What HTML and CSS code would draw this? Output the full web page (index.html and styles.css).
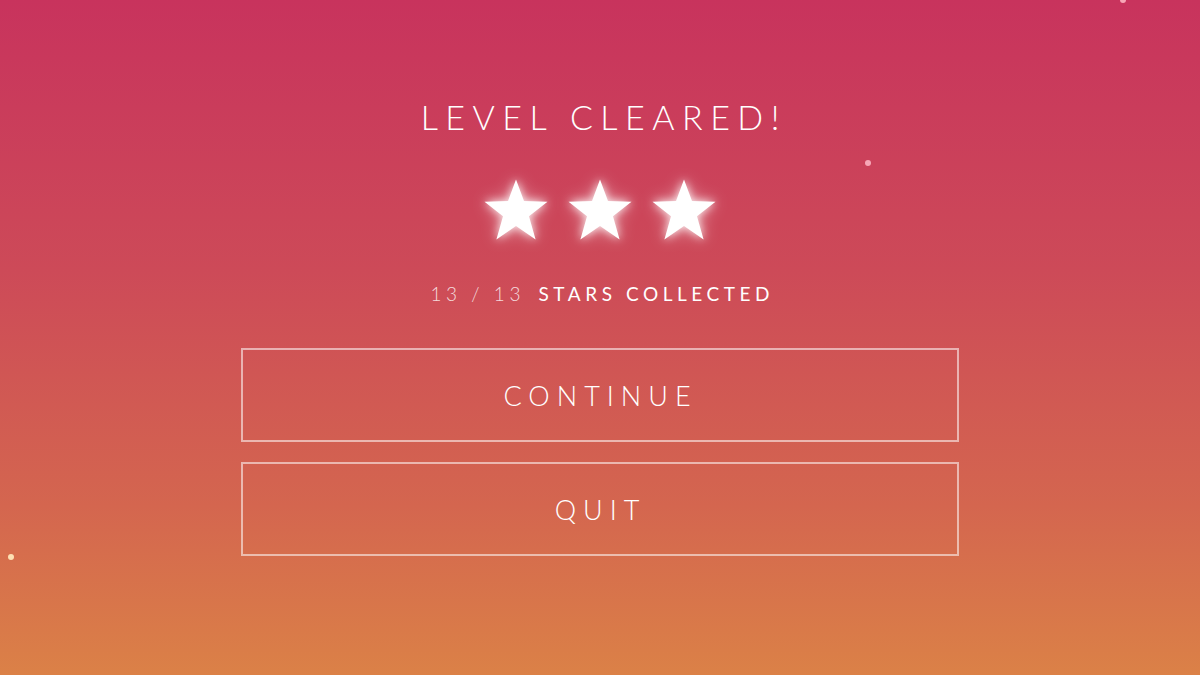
FILE: index.html
```html
<!DOCTYPE html>
<html lang="en">
<head>
  <meta charset="UTF-8">
  <title>Level Cleared</title>
  <link rel="stylesheet" href="styles.css">
</head>
<body>

  <!-- floating particles -->
  <span class="dot dot-pink" id="dot-a"></span>
  <span class="dot dot-pink" id="dot-b"></span>
  <span class="dot dot-cream" id="dot-c"></span>

  <main class="panel">
    <h1 class="title">LEVEL CLEARED!</h1>

    <div class="stars">
      <svg class="star" viewBox="0 0 64 62"><path d="M32 0.5 L40 22 L63.5 22.8 L45 37.3 L51.6 60.5 L32 47 L12.4 60.5 L19 37.3 L0.5 22.8 L24 22 Z"/></svg>
      <svg class="star" viewBox="0 0 64 62"><path d="M32 0.5 L40 22 L63.5 22.8 L45 37.3 L51.6 60.5 L32 47 L12.4 60.5 L19 37.3 L0.5 22.8 L24 22 Z"/></svg>
      <svg class="star" viewBox="0 0 64 62"><path d="M32 0.5 L40 22 L63.5 22.8 L45 37.3 L51.6 60.5 L32 47 L12.4 60.5 L19 37.3 L0.5 22.8 L24 22 Z"/></svg>
    </div>

    <p class="stats"><span class="count">13 / 13</span> STARS COLLECTED</p>

    <div class="menu">
      <button class="menu-btn">CONTINUE</button>
      <button class="menu-btn">QUIT</button>
    </div>
  </main>

</body>
</html>
```

FILE: styles.css
```css
/* ---------- page ---------- */
html, body {
  height: 100%;
}
body {
  margin: 0;
  overflow: hidden;
  font-family: Lato, "Open Sans", sans-serif;
  color: #fff;
  background: linear-gradient(to bottom, #c8335d 0%, #cd4a58 40%, #d4664f 75%, #db8147 100%);
}

.dot {
  position: absolute;
  width: 6px;
  height: 6px;
  border-radius: 50%;
}
.dot-pink  { background: #f7a6b6; }
.dot-cream { background: #fde1b4; }
#dot-a { left: 865px;  top: 160px; }
#dot-b { left: 1120px; top: -3px; }
#dot-c { left: 8px;    top: 554px; }

/* ---------- content ---------- */
.panel {
  width: 718px;
  margin: 0 auto;
  padding-top: 96px;
  text-align: center;
}

.title {
  margin: 0;
  font-size: 34px;
  font-weight: 300;
  line-height: 42px;
  letter-spacing: 0.22em;
  padding-left: 0.22em;
}

.stars {
  display: flex;
  justify-content: center;
  gap: 20px;
  margin-top: 41px;
}
.star {
  width: 64px;
  height: 62px;
  fill: #fff;
  filter: drop-shadow(0 0 4px rgba(255,255,255,0.85)) drop-shadow(0 0 8px rgba(255,255,255,0.45));
}

.stats {
  margin: 41px 0 0;
  font-size: 19px;
  font-weight: 400;
  line-height: 24px;
  letter-spacing: 0.24em;
  padding-left: 0.24em;
}
.count {
  font-weight: 300;
  color: rgba(255,255,255,0.8);
  margin-right: 4px;
}

.menu {
  display: flex;
  flex-direction: column;
  gap: 20px;
  margin-top: 42px;
}
.menu-btn {
  height: 94px;
  background: none;
  border: 2px solid rgba(255,255,255,0.55);
  color: #fff;
  font-family: inherit;
  font-size: 27px;
  font-weight: 300;
  letter-spacing: 0.26em;
  padding-left: 0.26em;
  cursor: pointer;
}
```
